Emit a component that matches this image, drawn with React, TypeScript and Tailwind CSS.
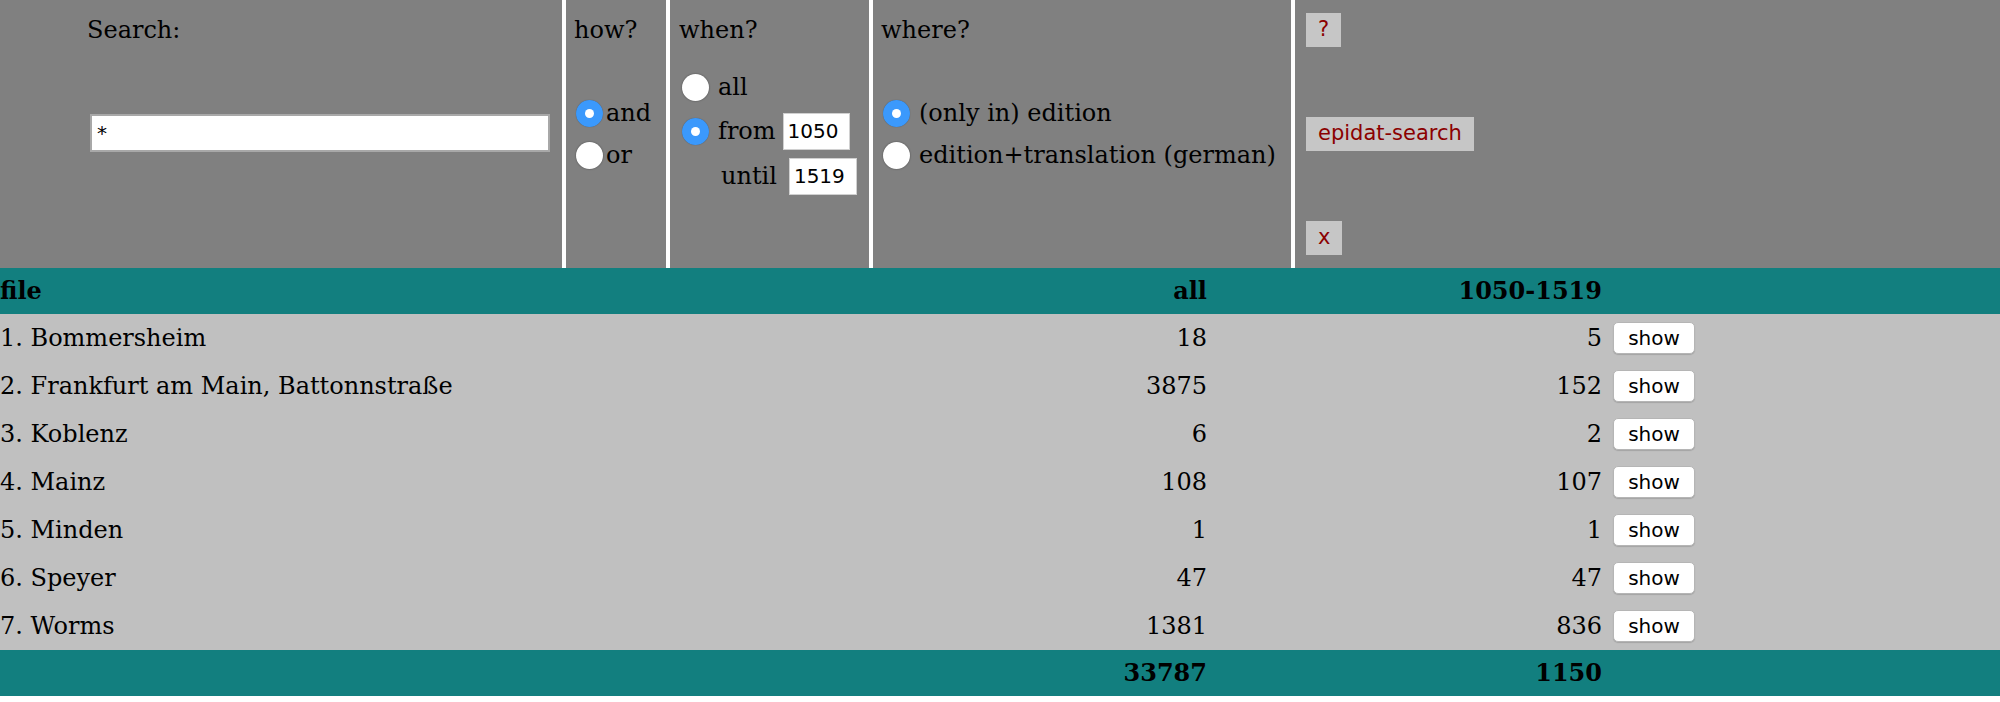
import React from "react";

const serif = "font-['DejaVu_Serif',serif]";
const sans = "font-['DejaVu_Sans',sans-serif]";

const rows = [
  { name: "1. Bommersheim", all: "18", range: "5" },
  { name: "2. Frankfurt am Main, Battonnstraße", all: "3875", range: "152" },
  { name: "3. Koblenz", all: "6", range: "2" },
  { name: "4. Mainz", all: "108", range: "107" },
  { name: "5. Minden", all: "1", range: "1" },
  { name: "6. Speyer", all: "47", range: "47" },
  { name: "7. Worms", all: "1381", range: "836" },
];

function Radio({ checked }: { checked?: boolean }) {
  if (checked) {
    return (
      <span className="inline-flex w-[27px] h-[27px] shrink-0 rounded-full bg-[#3b99fc] items-center justify-center shadow-[0_0_1px_rgba(0,0,0,0.4)]">
        <span className="w-[9px] h-[9px] rounded-full bg-white" />
      </span>
    );
  }
  return <span className="inline-block w-[27px] h-[27px] shrink-0 rounded-full bg-white shadow-[0_0_2px_rgba(0,0,0,0.45)]" />;
}

function SmallInput({ value, width }: { value: string; width: string }) {
  return (
    <div className={`${width} h-[37px] bg-white border border-[#d0d0d0] flex items-center pl-[4px] text-[20px] text-black ${sans}`}>
      {value}
    </div>
  );
}

function FormButton({ label }: { label: string }) {
  return (
    <div className={`h-[34px] self-start px-[12px] flex items-center bg-[#c6c6c6] text-[#8b0000] text-[21px] ${sans}`}>
      {label}
    </div>
  );
}

export default function App() {
  return (
    <div className={`w-[2000px] h-[702px] bg-white text-black text-[24px] ${serif}`}>
      {/* search form */}
      <div className="flex h-[268px] bg-[#808080]">
        <div className="w-[562px] flex flex-col">
          <div className="pl-[87px] pt-[14px] leading-[32px]">Search:</div>
          <div className={`ml-[90px] mt-[68px] w-[460px] h-[38px] bg-white border-2 border-[#a8a8a8] flex items-center pl-[5px] text-[20px] ${sans}`}>
            *
          </div>
        </div>

        <div className="w-[104px] border-l-4 border-white flex flex-col">
          <div className="pl-[8px] pt-[14px] leading-[32px]">how?</div>
          <div className="mt-[46px] pl-[10px] flex items-center h-[42px]">
            <Radio checked />
            <span className="ml-[3px]">and</span>
          </div>
          <div className="pl-[10px] flex items-center h-[42px]">
            <Radio />
            <span className="ml-[3px]">or</span>
          </div>
        </div>

        <div className="w-[203px] border-l-4 border-white flex flex-col">
          <div className="pl-[9px] pt-[14px] leading-[32px]">when?</div>
          <div className="mt-[19px] pl-[12px] flex items-center h-[44px]">
            <Radio />
            <span className="ml-[9px]">all</span>
          </div>
          <div className="pl-[12px] flex items-center h-[44px]">
            <Radio checked />
            <span className="ml-[9px] mr-[7px]">from</span>
            <SmallInput value="1050" width="w-[67px]" />
          </div>
          <div className="pl-[51px] flex items-center h-[46px]">
            <span className="mr-[12px]">until</span>
            <SmallInput value="1519" width="w-[68px]" />
          </div>
        </div>

        <div className="w-[422px] border-l-4 border-white flex flex-col">
          <div className="pl-[8px] pt-[14px] leading-[32px]">where?</div>
          <div className="mt-[46px] pl-[10px] flex items-center h-[42px]">
            <Radio checked />
            <span className="ml-[9px]">(only in) edition</span>
          </div>
          <div className="pl-[10px] flex items-center h-[42px]">
            <Radio />
            <span className="ml-[9px]">edition+translation (german)</span>
          </div>
        </div>

        <div className="flex-1 border-l-4 border-white flex flex-col justify-between pl-[11px] py-[13px]">
          <FormButton label="?" />
          <FormButton label="epidat-search" />
          <FormButton label="x" />
        </div>
      </div>

      {/* results */}
      <div className="grid grid-cols-[900px_307px_395px_1fr] h-[46px] items-center bg-[#127f7f] font-bold">
        <div>file</div>
        <div className="text-right">all</div>
        <div className="text-right">1050-1519</div>
        <div />
      </div>
      <div className="bg-[#c0c0c0]">
        {rows.map((row) => (
          <div key={row.name} className="grid grid-cols-[900px_307px_395px_1fr] h-[48px] items-center">
            <div>{row.name}</div>
            <div className="text-right">{row.all}</div>
            <div className="text-right">{row.range}</div>
            <div className="pl-[11px]">
              <div className={`w-[82px] h-[32px] rounded-[5px] bg-white border border-[#b5b5b5] shadow-[0_1px_1px_rgba(0,0,0,0.15)] flex items-center justify-center text-[20px] ${sans}`}>
                show
              </div>
            </div>
          </div>
        ))}
      </div>
      <div className="grid grid-cols-[900px_307px_395px_1fr] h-[46px] items-center bg-[#127f7f] font-bold">
        <div />
        <div className="text-right">33787</div>
        <div className="text-right">1150</div>
        <div />
      </div>
    </div>
  );
}
